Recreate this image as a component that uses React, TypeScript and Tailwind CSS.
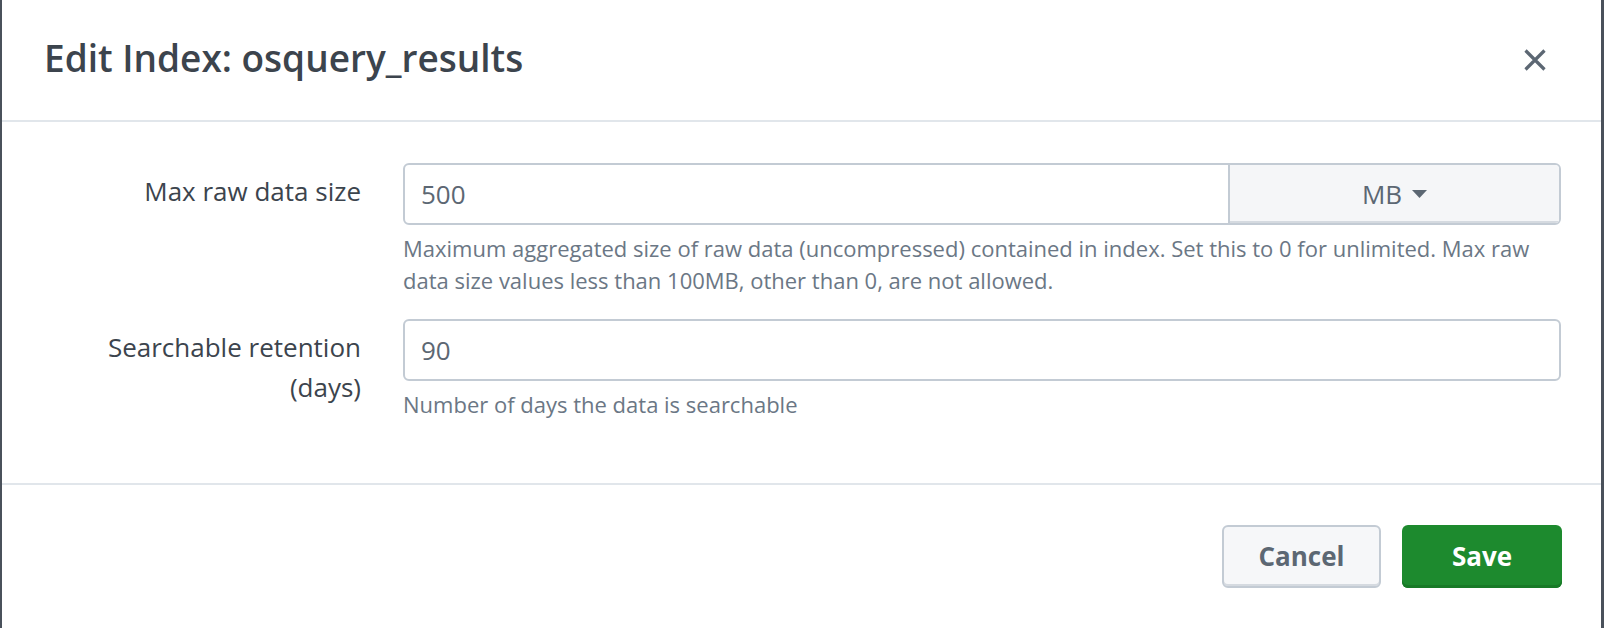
import React from 'react';

const labelCls = "text-right text-[26px] leading-[40px] pt-[8px] text-[#3c444d]";
const helpCls = "mt-[7px] text-[22px] leading-[32px] text-[#6b7785]";
const inputCls = "h-full w-full min-w-0 bg-transparent px-[16px] text-[26px] text-[#5c6773] outline-none";

const CloseIcon = () => (
  <svg width="22" height="22" viewBox="0 0 22 22" fill="none" stroke="#5c6773" strokeWidth="3.2">
    <path d="M1.5 1.5 L20.5 20.5 M20.5 1.5 L1.5 20.5" />
  </svg>
);

const Caret = () => (
  <svg width="15" height="8" viewBox="0 0 15 8" fill="#5c6773">
    <path d="M0 0 H15 L7.5 8 Z" />
  </svg>
);

const EditIndexModal = () => {
  return (
    <div className="min-h-screen bg-[#4a515b] pl-[2px] pr-[3px] font-['Open_Sans',sans-serif]">
      <div className="flex min-h-[628px] flex-col bg-white">
        {/* header */}
        <header className="flex h-[122px] items-center justify-between border-b-2 border-[#e1e6eb] pl-[42px] pr-[55px]">
          <h1 className="pb-[5px] text-[37px] font-semibold leading-[44px] text-[#3c444d]">
            Edit Index: osquery_results
          </h1>
          <button className="-mt-[1px]" aria-label="Close">
            <CloseIcon />
          </button>
        </header>

        {/* form */}
        <div className="grid grid-cols-[317px_1fr] gap-x-[42px] gap-y-[23px] border-b-2 border-[#e1e6eb] pb-[63px] pl-[42px] pr-[40px] pt-[41px]">
          <label className={labelCls}>Max raw data size</label>
          <div>
            <div className="flex h-[62px] overflow-hidden rounded-[6px] border-2 border-[#c3cbd4]">
              <input className={inputCls} defaultValue="500" readOnly />
              <button className="flex w-[331px] shrink-0 items-center justify-center gap-[10px] border-l-2 border-[#c3cbd4] bg-[#f5f6f8] text-[26px] text-[#5c6773] shadow-[inset_0_-2px_0_#d5dae0]">
                MB <Caret />
              </button>
            </div>
            <p className={helpCls}>
              Maximum aggregated size of raw data (uncompressed) contained in index. Set this to 0 for unlimited. Max raw data size values less than 100MB, other than 0, are not allowed.
            </p>
          </div>

          <label className={labelCls}>Searchable retention (days)</label>
          <div>
            <div className="h-[62px] rounded-[6px] border-2 border-[#c3cbd4]">
              <input className={inputCls} defaultValue="90" readOnly />
            </div>
            <p className={helpCls}>Number of days the data is searchable</p>
          </div>
        </div>

        {/* footer */}
        <footer className="flex justify-end gap-[21px] pr-[39px] pt-[40px]">
          <button className="h-[63px] w-[159px] rounded-[6px] border-2 border-[#c3cbd4] bg-[#f6f7f9] text-[26px] font-bold text-[#5c6773] shadow-[inset_0_-2px_0_#d5dae0]">
            Cancel
          </button>
          <button className="h-[63px] w-[160px] rounded-[6px] bg-[#1d8a2e] text-[26px] font-bold text-white shadow-[inset_0_-3px_0_#187a27]">
            Save
          </button>
        </footer>
      </div>
    </div>
  );
};

export default function App() {
  return <EditIndexModal />;
}
